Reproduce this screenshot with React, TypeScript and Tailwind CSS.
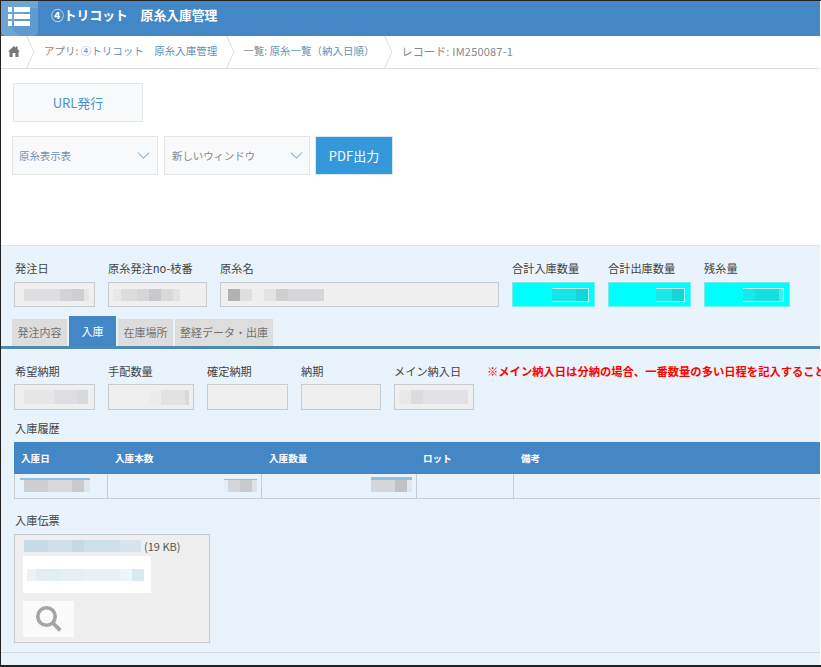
import React from 'react';
import { ChevronDown } from 'lucide-react';

const font = { fontFamily: '"Noto Sans CJK JP", "Liberation Sans", sans-serif' };

// pixelated redaction patch: list of [width, colour]
function Mosaic({ cells, h = 12, ml = 0 }: { cells: [number, string][]; h?: number; ml?: number }) {
  return (
    <div className="flex shrink-0" style={{ marginLeft: ml }}>
      {cells.map(([w, c], i) => (
        <div key={i} className="shrink-0" style={{ width: w, height: h, background: c }} />
      ))}
    </div>
  );
}

function Chevron() {
  return (
    <svg width="9" height="32" viewBox="0 0 9 32" fill="none" className="shrink-0">
      <path d="M0.5 0 L8 16 L0.5 32" stroke="#ddd" />
    </svg>
  );
}

function Crumb({ children, pl, pr }: { children: React.ReactNode; pl: string; pr: string }) {
  return (
    <div className="flex items-center h-full text-[10.5px] text-[#888] whitespace-nowrap">
      <div className={`${pl} ${pr} pb-[2px]`}>{children}</div>
      <Chevron />
    </div>
  );
}

function Field({ label, w, h = 25, first = false, top = false, children, className = '' }: { label: string; w: number; h?: number; first?: boolean; top?: boolean; children?: React.ReactNode; className?: string }) {
  return (
    <div style={{ width: w }} className={`shrink-0 ${className}`}>
      <div className={`text-[11.2px] leading-[16px] text-[#444] whitespace-nowrap ${first ? 'pl-px' : ''}`}>{label}</div>
      <div className={`${top ? 'mt-[6px]' : 'mt-[5px]'} border border-[#c6cdd0] bg-[#efefef] flex items-center overflow-hidden`} style={{ height: h }}>{children}</div>
    </div>
  );
}

function Qty({ label, w, cells }: { label: string; w: number; cells: [number, string][] }) {
  return (
    <div style={{ width: w }} className="shrink-0">
      <div className="text-[11.2px] leading-[16px] text-[#444] whitespace-nowrap">{label}</div>
      <div className="mt-[6px] h-[25px] bg-[#00ffff] border border-[#7be8ea] flex items-center justify-end pr-[5px]">
        <div className="border-y border-r border-[#b8f4f4]">
          <Mosaic cells={cells} h={12} />
        </div>
      </div>
    </div>
  );
}

const tabClass = 'h-[27px] bg-[#dddddd] text-[#707070] text-[11px] flex items-center justify-center';

export default function App() {
  return (
    <div style={font} className="w-[821px] h-[667px] overflow-hidden bg-white border-t border-l border-b-2 border-[#222] flex flex-col">
      {/* header */}
      <div className="h-[35px] bg-[#4487c6] flex items-center shrink-0 mr-px">
        <div className="relative w-[37px] h-[35px] bg-[#6da5d6] rounded-b-[5px] overflow-hidden self-start shrink-0 z-10">
          <svg width="37" height="35" viewBox="0 0 37 35" className="absolute inset-0">
            <path d="M8 25 L28 7 L37 7 L37 35 L18 35 Z" fill="#5f9bd0" />
            <g fill="#fff">
              <rect x="7" y="6" width="4" height="5" /><rect x="13" y="6" width="16" height="5" />
              <rect x="7" y="13" width="4" height="5" /><rect x="13" y="13" width="16" height="5" />
              <rect x="7" y="20" width="4" height="5" /><rect x="13" y="20" width="16" height="5" />
            </g>
          </svg>
        </div>
        <div className="ml-[13px] pb-[7px] text-white text-[12.8px] font-bold whitespace-pre">④トリコット　原糸入庫管理</div>
      </div>

      {/* breadcrumb */}
      <div className="h-[33px] border-b border-[#ddd] flex items-center shrink-0 mr-px">
        <div className="flex items-center h-full">
          <div className="w-[25px] flex justify-center pb-[1px]">
            <svg width="12" height="11" viewBox="0 0 12 11" fill="#777">
              <path d="M6 0 L8 1.8 L8 0.6 L9.6 0.6 L9.6 3.3 L12 5.5 L10.5 5.5 L10.5 11 L7.4 11 L7.4 7 L4.6 7 L4.6 11 L1.5 11 L1.5 5.5 L0 5.5 Z" />
            </svg>
          </div>
          <Chevron />
        </div>
        <Crumb pl="pl-[9px]" pr="pr-[9px]">アプリ: <span className="text-[#5f93ba]">④トリコット　原糸入庫管理</span></Crumb>
        <Crumb pl="pl-[8px]" pr="pr-[9px]">一覧: <span className="text-[#5f93ba]">原糸一覧（納入日順）</span></Crumb>
        <div className="pl-[9px] pb-[2px] text-[11px] tracking-[0.2px] text-[#888]">レコード: IM250087-1</div>
      </div>

      {/* actions */}
      <div className="h-[176px] shrink-0 pl-[11px] pt-[14px] mr-px">
        <button className="block ml-px w-[130px] h-[39px] bg-[#f7f9fa] border border-[#e3e7e8] text-[#4a96cc] text-[13px]">URL発行</button>
        <div className="mt-[14px] flex items-stretch h-[39px]">
          <div className="w-[146px] bg-[#f7f9fa] border border-[#e3e7e8] flex items-center justify-between pl-[6px] pr-[3px] text-[10.4px] text-[#6d93b5]">
            原糸表示表<ChevronDown size={21} strokeWidth={1.2} className="text-[#8fb6d6]" />
          </div>
          <div className="ml-[6px] w-[146px] bg-[#f7f9fa] border border-[#e3e7e8] flex items-center justify-between pl-[7px] pr-[2px] text-[10.4px] text-[#888]">
            新しいウィンドウ<ChevronDown size={21} strokeWidth={1.2} className="text-[#8fb6d6]" />
          </div>
          <button className="ml-[5px] w-[78px] bg-[#3498db] border border-[#d4e6f3] text-white text-[13px]">PDF出力</button>
        </div>
      </div>

      {/* record */}
      <div className="flex-1 min-h-0 bg-[#e9f3fb] border-t border-[#dde3e6] pt-[14px] mr-px">
        <div className="flex pl-[13px]">
          <Field label="発注日" w={81} first top className="mr-[13px]">
            <Mosaic ml={9} cells={[[36, '#dedee0'], [12, '#d4d4d6'], [12, '#cfcfd1'], [5, '#e6e6e6']]} />
          </Field>
          <Field label="原糸発注no-枝番" w={99} top className="mr-[13px]">
            <Mosaic ml={4} cells={[[8, '#e8e8e8'], [16, '#dcdcdd'], [12, '#d6d6d8'], [12, '#c9c9cb'], [12, '#d9d9da'], [7, '#e2e2e3']]} />
          </Field>
          <Field label="原糸名" w={279} top className="mr-[13px]">
            <Mosaic ml={7} cells={[[12, '#b2b2b4'], [12, '#dedee0'], [12, '#eeeeee'], [12, '#e3e3e4'], [12, '#cfcfd1'], [36, '#d6d6d8']]} />
          </Field>
          <Qty label="合計入庫数量" w={83} cells={[[24, '#17e4e6'], [12, '#13d6d8']]} />
          <div className="w-[13px] shrink-0" />
          <Qty label="合計出庫数量" w={83} cells={[[16, '#1ce6e8'], [12, '#16d6d8']]} />
          <div className="w-[13px] shrink-0" />
          <Qty label="残糸量" w={86} cells={[[12, '#18eaec'], [24, '#17dfe1'], [4, '#40eeef']]} />
        </div>

        {/* tabs */}
        <div className="mt-[9px] h-[33px] border-b-[3px] border-[#4f8ab5] flex items-end pl-[11px] gap-[2px]">
          <div className={`${tabClass} w-[55px]`}>発注内容</div>
          <div className="h-[30px] w-[47px] bg-[#4487c6] text-white text-[11px] flex items-center justify-center">入庫</div>
          <div className={`${tabClass} w-[55px]`}>在庫場所</div>
          <div className={`${tabClass} w-[98px]`}>整経データ・出庫</div>
        </div>

        {/* dates */}
        <div className="flex pl-[13px] pt-[14px]">
          <Field label="希望納期" w={81} h={26} first className="mr-[13px]">
            <Mosaic ml={9} h={14} cells={[[30, '#e6e6e7'], [24, '#dedee0'], [10, '#d9d9da']]} />
          </Field>
          <Field label="手配数量" w={86} h={26} className="mr-[13px]">
            <div className="ml-auto mr-[4px]"><Mosaic cells={[[12, '#ececec'], [24, '#e2e2e3'], [4, '#d9d9da']]} h={15} /></div>
          </Field>
          <Field label="確定納期" w={81} h={26} className="mr-[13px]" />
          <Field label="納期" w={80} h={26} className="mr-[13px]" />
          <Field label="メイン納入日" w={80} h={26} className="mr-[13px]">
            <Mosaic ml={4} h={14} cells={[[12, '#e8e8e9'], [12, '#dcdcdd'], [45, '#e2e2e4']]} />
          </Field>
          <div className="text-[11.3px] leading-[16px] font-bold text-[#ff0000] whitespace-nowrap">※メイン納入日は分納の場合、一番数量の多い日程を記入すること</div>
        </div>

        {/* history */}
        <div className="mt-[10px] pl-[13px]">
          <div className="pl-px text-[11.2px] leading-[16px] text-[#444]">入庫履歴</div>
          <div className="mt-[6px] h-[32px] bg-[#4487c6] flex items-center text-[9.6px] font-bold text-white">
            <div className="w-[93px] pl-[7px]">入庫日</div>
            <div className="w-[154px] pl-[8px]">入庫本数</div>
            <div className="w-[155px] pl-[8px]">入庫数量</div>
            <div className="w-[97px] pl-[7px]">ロット</div>
            <div className="pl-[8px]">備考</div>
          </div>
          <div className="h-[25px] flex border-b border-l border-[#c6cdd0]">
            <div className="w-[93px] border-r border-[#c6cdd0] pl-[5px] pt-[4px]">
              <div className="w-[70px] h-[2px] bg-[#92c0e4]" />
              <Mosaic ml={4} cells={[[24, '#cfcfd2'], [24, '#d9d9dc'], [12, '#cacace'], [6, '#e2e6ea']]} />
            </div>
            <div className="w-[154px] border-r border-[#c6cdd0] pt-[5px] pr-[4px] flex flex-col items-end">
              <div className="w-[33px] h-px bg-[#92c0e4]" />
              <Mosaic cells={[[4, '#e3eef6'], [12, '#d5d6d9'], [12, '#c9cacd'], [5, '#dfe3e6']]} />
            </div>
            <div className="w-[155px] border-r border-[#c6cdd0] pt-[3px] pr-[4px] flex flex-col items-end">
              <div className="w-[41px] h-[3px] bg-[#92c0e4]" />
              <Mosaic cells={[[24, '#d5d6d9'], [12, '#c2c2c4'], [5, '#dfe6ec']]} />
            </div>
            <div className="w-[97px] border-r border-[#c6cdd0]" />
            <div className="flex-1" />
          </div>
        </div>

        {/* attachment */}
        <div className="mt-[13px] pl-[13px]">
          <div className="pl-px text-[11.2px] leading-[16px] text-[#444]">入庫伝票</div>
          <div className="mt-[6px] w-[196px] h-[109px] bg-[#efefef] border border-[#c6cdd0] pl-[8px] pt-[5px]">
            <div className="flex items-center h-[12px] ml-px">
              <Mosaic cells={[[24, '#c7dbe7'], [24, '#cfe0ea'], [12, '#c5d9e5'], [36, '#cce0ea'], [21, '#d6e4ec']]} />
              <span className="ml-[3px] text-[11px] text-[#555]">(19 KB)</span>
            </div>
            <div className="mt-[4px] w-[128px] h-[37px] bg-white flex items-center pl-[4px]">
              <Mosaic cells={[[9, '#eef2f4'], [24, '#e3eef4'], [24, '#e6eff5'], [36, '#e9f1f6'], [12, '#f0f5f8'], [12, '#d8e9f2']]} />
            </div>
            <div className="mt-[8px] w-[51px] h-[36px] bg-[#fafafa] flex items-center justify-center">
              <svg width="26" height="26" viewBox="0 0 26 26" fill="none" stroke="#a5a5a5">
                <circle cx="10.5" cy="10.5" r="8.7" strokeWidth="3.6" />
                <path d="M16.8 16.8 L24.3 24.3" strokeWidth="3.8" />
              </svg>
            </div>
          </div>
        </div>

        <div className="mt-[9px] border-t border-[#d5dadd]" />
      </div>
    </div>
  );
}
